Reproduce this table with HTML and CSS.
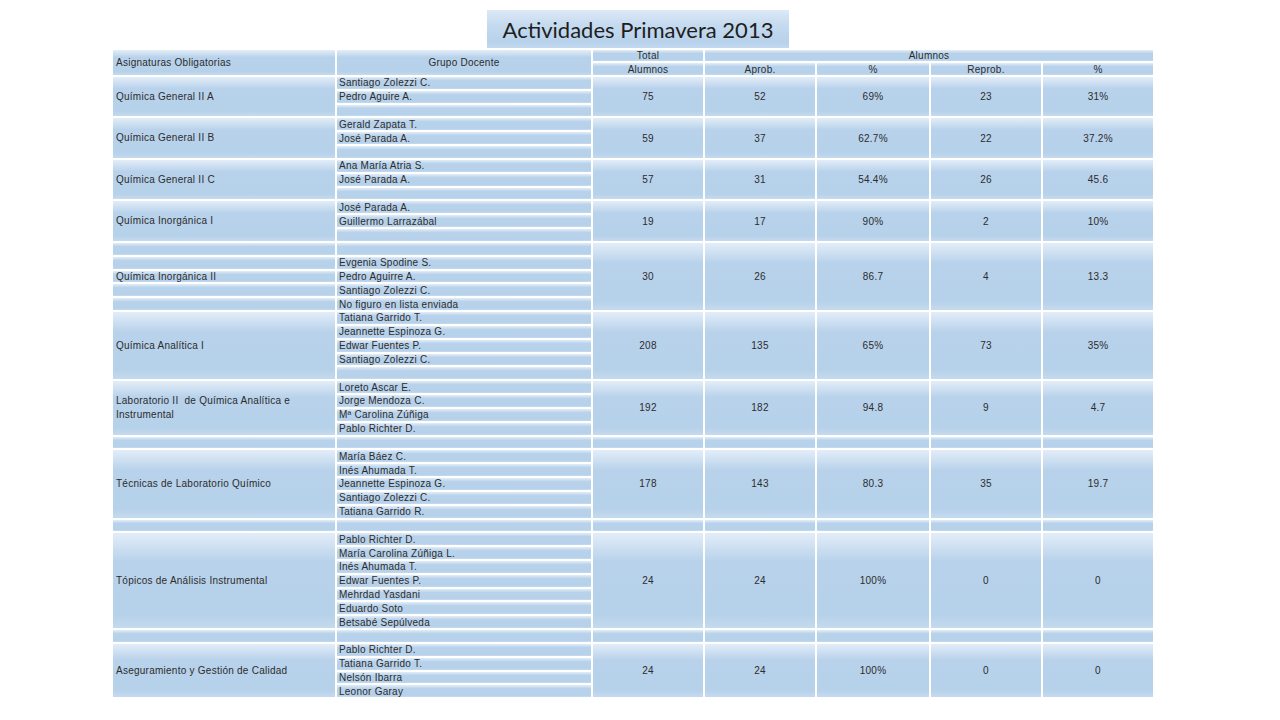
FILE: index.html
```html
<!DOCTYPE html>
<html lang="es">
<head>
<meta charset="utf-8">
<title>Actividades Primavera 2013</title>
<link rel="stylesheet" href="styles.css">
</head>
<body>
<div class="page">
  <div class="title">Actividades Primavera 2013</div>
  <table class="grid">
    <colgroup>
      <col class="c-asig"><col class="c-doc"><col class="c-n"><col class="c-n"><col class="c-w"><col class="c-n"><col class="c-n">
    </colgroup>
    <thead>
      <tr class="h1">
        <td rowspan="2" class="left">Asignaturas Obligatorias</td>
        <td rowspan="2">Grupo Docente</td>
        <td>Total</td>
        <td colspan="4">Alumnos</td>
      </tr>
      <tr class="h2">
        <td>Alumnos</td><td>Aprob.</td><td>%</td><td>Reprob.</td><td>%</td>
      </tr>
    </thead>
    <tbody>
      <tr class="r"><td rowspan="3" class="left big">Química General II A</td><td class="doc">Santiago Zolezzi C.</td><td rowspan="3">75</td><td rowspan="3">52</td><td rowspan="3">69%</td><td rowspan="3">23</td><td rowspan="3">31%</td></tr>
      <tr class="r"><td class="doc">Pedro Aguire A.</td></tr>
      <tr class="r"><td class="doc"></td></tr>

      <tr class="r"><td rowspan="3" class="left big">Química General II B</td><td class="doc">Gerald Zapata T.</td><td rowspan="3">59</td><td rowspan="3">37</td><td rowspan="3">62.7%</td><td rowspan="3">22</td><td rowspan="3">37.2%</td></tr>
      <tr class="r"><td class="doc">José Parada A.</td></tr>
      <tr class="r"><td class="doc"></td></tr>

      <tr class="r"><td rowspan="3" class="left big">Química General II C</td><td class="doc">Ana María Atria S.</td><td rowspan="3">57</td><td rowspan="3">31</td><td rowspan="3">54.4%</td><td rowspan="3">26</td><td rowspan="3">45.6</td></tr>
      <tr class="r"><td class="doc">José Parada A.</td></tr>
      <tr class="r"><td class="doc"></td></tr>

      <tr class="r"><td rowspan="3" class="left big">Química Inorgánica I</td><td class="doc">José Parada A.</td><td rowspan="3">19</td><td rowspan="3">17</td><td rowspan="3">90%</td><td rowspan="3">2</td><td rowspan="3">10%</td></tr>
      <tr class="r"><td class="doc">Guillermo Larrazábal</td></tr>
      <tr class="r"><td class="doc"></td></tr>

      <tr class="r"><td class="left"></td><td class="doc"></td><td rowspan="5">30</td><td rowspan="5">26</td><td rowspan="5">86.7</td><td rowspan="5">4</td><td rowspan="5">13.3</td></tr>
      <tr class="r"><td class="left"></td><td class="doc">Evgenia Spodine S.</td></tr>
      <tr class="r"><td class="left">Química Inorgánica II</td><td class="doc">Pedro Aguirre A.</td></tr>
      <tr class="r"><td class="left"></td><td class="doc">Santiago Zolezzi C.</td></tr>
      <tr class="r"><td class="left"></td><td class="doc">No figuro en lista enviada</td></tr>

      <tr class="r"><td rowspan="5" class="left big">Química Analítica I</td><td class="doc">Tatiana Garrido T.</td><td rowspan="5">208</td><td rowspan="5">135</td><td rowspan="5">65%</td><td rowspan="5">73</td><td rowspan="5">35%</td></tr>
      <tr class="r"><td class="doc">Jeannette Espinoza G.</td></tr>
      <tr class="r"><td class="doc">Edwar Fuentes P.</td></tr>
      <tr class="r"><td class="doc">Santiago Zolezzi C.</td></tr>
      <tr class="r"><td class="doc"></td></tr>

      <tr class="r"><td rowspan="4" class="left big">Laboratorio II&nbsp; de Química Analítica e Instrumental</td><td class="doc">Loreto Ascar E.</td><td rowspan="4">192</td><td rowspan="4">182</td><td rowspan="4">94.8</td><td rowspan="4">9</td><td rowspan="4">4.7</td></tr>
      <tr class="r"><td class="doc">Jorge Mendoza C.</td></tr>
      <tr class="r"><td class="doc">Mª Carolina Zúñiga</td></tr>
      <tr class="r"><td class="doc">Pablo Richter D.</td></tr>

      <tr class="r"><td></td><td></td><td></td><td></td><td></td><td></td><td></td></tr>

      <tr class="r"><td rowspan="5" class="left big">Técnicas de Laboratorio Químico</td><td class="doc">María Báez C.</td><td rowspan="5">178</td><td rowspan="5">143</td><td rowspan="5">80.3</td><td rowspan="5">35</td><td rowspan="5">19.7</td></tr>
      <tr class="r"><td class="doc">Inés Ahumada T.</td></tr>
      <tr class="r"><td class="doc">Jeannette Espinoza G.</td></tr>
      <tr class="r"><td class="doc">Santiago Zolezzi C.</td></tr>
      <tr class="r"><td class="doc">Tatiana Garrido R.</td></tr>

      <tr class="r"><td></td><td></td><td></td><td></td><td></td><td></td><td></td></tr>

      <tr class="r"><td rowspan="7" class="left big">Tópicos de Análisis Instrumental</td><td class="doc">Pablo Richter D.</td><td rowspan="7">24</td><td rowspan="7">24</td><td rowspan="7">100%</td><td rowspan="7">0</td><td rowspan="7">0</td></tr>
      <tr class="r"><td class="doc">María Carolina Zúñiga L.</td></tr>
      <tr class="r"><td class="doc">Inés Ahumada T.</td></tr>
      <tr class="r"><td class="doc">Edwar Fuentes P.</td></tr>
      <tr class="r"><td class="doc">Mehrdad Yasdani</td></tr>
      <tr class="r"><td class="doc">Eduardo Soto</td></tr>
      <tr class="r"><td class="doc">Betsabé Sepúlveda</td></tr>

      <tr class="r"><td></td><td></td><td></td><td></td><td></td><td></td><td></td></tr>

      <tr class="r"><td rowspan="4" class="left big">Aseguramiento y Gestión de Calidad</td><td class="doc">Pablo Richter D.</td><td rowspan="4">24</td><td rowspan="4">24</td><td rowspan="4">100%</td><td rowspan="4">0</td><td rowspan="4">0</td></tr>
      <tr class="r"><td class="doc">Tatiana Garrido T.</td></tr>
      <tr class="r"><td class="doc">Nelsón Ibarra</td></tr>
      <tr class="r"><td class="doc">Leonor Garay</td></tr>
    </tbody>
  </table>
</div>
</body>
</html>
```
FILE: styles.css
```css
html, body {
  margin: 0;
  padding: 0;
  background: #ffffff;
}

.page {
  width: 1280px;
  height: 720px;
  padding: 10px 0 0 111px;
  box-sizing: border-box;
  display: flex;
  flex-direction: column;
  align-items: flex-start;
}

.title {
  margin-left: 376px;
  width: 302px;
  height: 38px;
  box-sizing: border-box;
  display: flex;
  align-items: center;
  justify-content: center;
  font-family: "Lato", "Liberation Sans", sans-serif;
  font-size: 22px;
  color: #1e1e1e;
  background: linear-gradient(to bottom, #dde9f6 0%, #c4daef 40%, #b8d2eb 85%, #c3d9ee 100%);
}

.grid {
  table-layout: fixed;
  width: 1044px;
  border-collapse: separate;
  border-spacing: 2px;
  margin-top: 0;
  font-family: "Liberation Sans", Arial, sans-serif;
  font-size: 10px;
  letter-spacing: 0.25px;
  color: #2c2c2c;
}

.c-asig { width: 222px; }
.c-doc { width: 254px; }
.c-n { width: 110px; }
.c-w { width: 112px; }

.grid td {
  padding: 0;
  line-height: 11px;
  text-align: center;
  vertical-align: middle;
  white-space: nowrap;
  overflow: hidden;
  background: linear-gradient(to bottom, #e3edf8 0%, #b8d2eb 30%, #b6d1ea 86%, #c5daee 100%);
}

.grid td.left {
  text-align: left;
  padding-left: 3px;
}

.grid td.big {
  white-space: normal;
  line-height: 14px;
  padding-right: 30px;
}

.grid td.doc {
  text-align: left;
  padding-left: 2px;
}

.h1 { height: 11px; }
.h2 { height: 12px; }
.r { height: 11.84px; }
```
